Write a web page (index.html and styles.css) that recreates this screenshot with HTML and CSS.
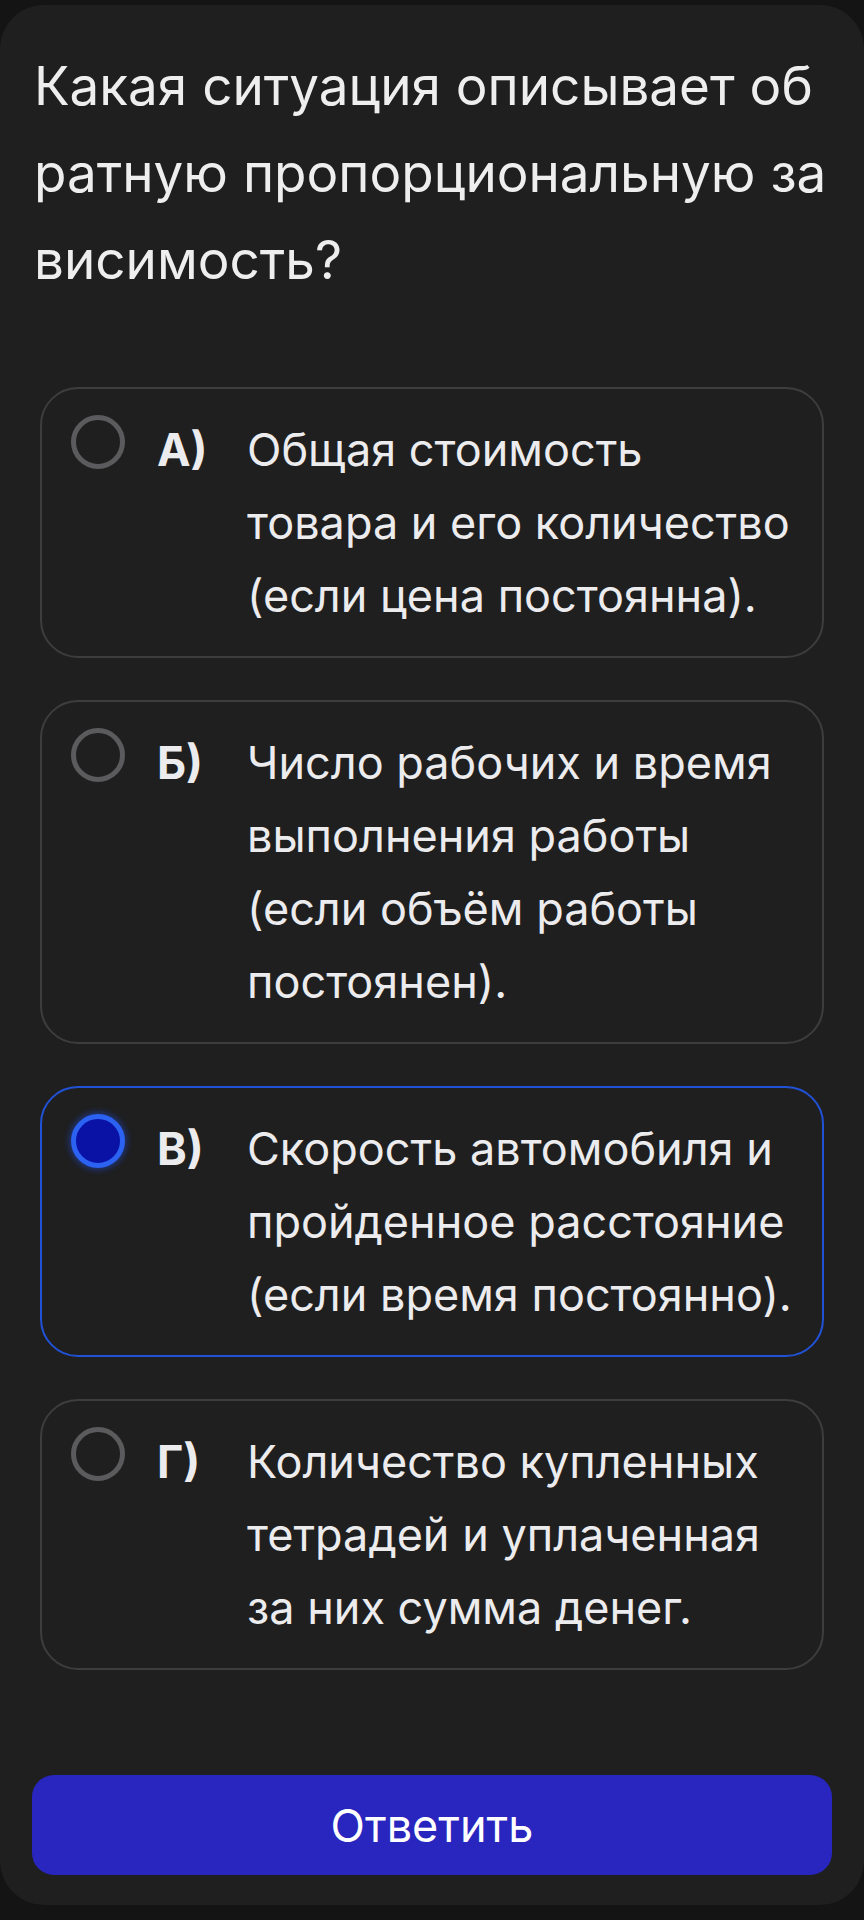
FILE: index.html
```html
<!DOCTYPE html>
<html lang="ru">
<head>
<meta charset="utf-8">
<title>Вопрос</title>
<link rel="stylesheet" href="styles.css">
</head>
<body>
<div class="card">
  <h1 class="question">Какая ситуация описывает обратную пропорциональную зависимость?</h1>
  <div class="options">
    <div class="option">
      <span class="radio"></span>
      <span class="letter">А)</span>
      <span class="text">Общая стоимость товара и его количество (если цена постоянна).</span>
    </div>
    <div class="option">
      <span class="radio"></span>
      <span class="letter">Б)</span>
      <span class="text">Число рабочих и время выполнения работы (если объём работы постоянен).</span>
    </div>
    <div class="option selected">
      <span class="radio"></span>
      <span class="letter">В)</span>
      <span class="text">Скорость автомобиля и пройденное расстояние (если время постоянно).</span>
    </div>
    <div class="option">
      <span class="radio"></span>
      <span class="letter">Г)</span>
      <span class="text">Количество купленных тетрадей и уплаченная за них сумма денег.</span>
    </div>
  </div>
  <div class="footer">
    <button class="submit">Ответить</button>
  </div>
</div>
</body>
</html>
```
FILE: styles.css
```css
html, body {
  margin: 0;
  padding: 0;
  background: #141414;
}
body {
  font-family: "Inter", "Noto Sans", sans-serif;
  color: #ececee;
  padding-top: 5px;
}
.card {
  box-sizing: border-box;
  height: 1900px;
  background: #1f1f1f;
  border-radius: 44px;
  padding: 38px 34px 0 34px;
  display: flex;
  flex-direction: column;
}
.question {
  margin: 0;
  font-size: 53px;
  line-height: 87px;
  font-weight: 400;
  word-break: break-all;
  color: #eeeeef;
}
.options {
  margin: 83px 6px 0 6px;
  display: flex;
  flex-direction: column;
  gap: 42px;
}
.option {
  display: flex;
  align-items: flex-start;
  border: 2px solid #3d3d3f;
  border-radius: 38px;
  padding: 24px 22px 24px 29px;
  font-size: 45px;
  line-height: 73px;
}
.option.selected {
  border-color: #2152d6;
}
.radio {
  flex: none;
  box-sizing: border-box;
  width: 54px;
  height: 54px;
  margin-top: 2px;
  border: 5px solid #5b5b5d;
  border-radius: 50%;
}
.selected .radio {
  border-color: #2c62f2;
  background: #0a12a6;
  box-shadow: 0 0 6px 2px rgba(30, 80, 240, 0.45);
}
.letter {
  flex: none;
  width: 90px;
  margin-left: 32px;
  font-weight: 700;
}
.text {
  flex: 1;
}
.footer {
  margin-top: auto;
  padding: 0 0 30px 0;
  margin-left: -2px;
  margin-right: -2px;
}
.submit {
  display: block;
  width: 100%;
  height: 100px;
  border: none;
  border-radius: 22px;
  background: #2925bf;
  color: #ffffff;
  font-family: "Inter", "Noto Sans", sans-serif;
  font-size: 45px;
  font-weight: 400;
}
```
